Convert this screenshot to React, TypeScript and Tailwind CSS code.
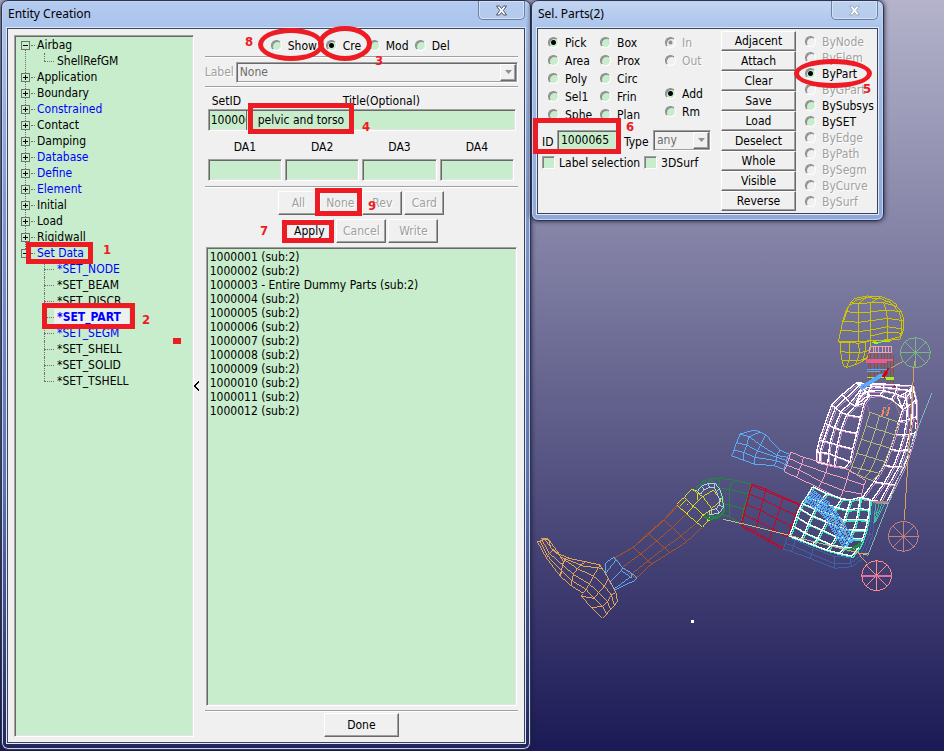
import React from 'react';
import clsx from 'clsx';

type Point = [number, number];

const FONT = "font-['DejaVu_Sans_Condensed','Noto_Sans',sans-serif]";
const SUNKEN =
  'border border-t-[#a0a0a0] border-l-[#a0a0a0] border-b-white border-r-white rounded-none shadow-[inset_1px_1px_0_#696969,inset_-1px_-1px_0_#e3e3e3] bg-[#c8edcc]';
const RAISED =
  'border border-t-white border-l-white border-b-[#696969] border-r-[#696969] shadow-[inset_-1px_-1px_0_#a0a0a0] bg-[#f0f0f0]';
const ETCHED = 'text-[#a0a0a0] [text-shadow:1px_1px_0_#fff]';

/* ---------- controls ---------- */

interface WindowProps {
  title: string;
  className?: string;
  active?: boolean;
  children: React.ReactNode;
}

const Window: React.FC<WindowProps> = ({ title, className, active, children }) => (
  <section
    className={clsx(
      'relative flex flex-col rounded-[7px] border border-[#2b3450] px-[5px] pb-[6px] shadow-[inset_0_0_0_1px_#c3d3ee,0_0_5px_#1b1b35]',
      className
    )}
  >
    <header className="flex h-[27px] shrink-0 items-start justify-between">
      <h1 className="pt-1 pl-[1px] font-['Noto_Sans',sans-serif] text-[12px] leading-[18px] text-black">
        {title}
      </h1>
      <button
        aria-label="Close"
        className="flex h-[19px] w-[47px] items-center justify-center rounded-b-[5px] border border-t-0 border-[#6c7f9f] bg-[#b9cdec]/60 shadow-[inset_0_0_0_1px_#d5e2f5]"
      >
        <svg width="13" height="11" viewBox="0 0 13 11">
          <path
            d="M1.5 1h3l2 2.5 2-2.5h3L8.3 5.5l3.2 4.5h-3l-2-2.6-2 2.6h-3l3.2-4.5z"
            fill="#fff"
            stroke={active ? '#4a5262' : '#9aa8be'}
          />
        </svg>
      </button>
    </header>
    <div className="flex grow border border-[#39435c] bg-[#f0f0f0] shadow-[0_0_0_1px_#dfe8f6]">
      {children}
    </div>
  </section>
);

interface RadioProps {
  name: string;
  label: string;
  checked?: boolean;
  disabled?: boolean;
  className?: string;
}

const Radio: React.FC<RadioProps> = ({ name, label, checked, disabled, className }) => (
  <label className={clsx('flex items-center gap-[6px]', disabled && ETCHED, className)}>
    <input
      type="radio"
      name={name}
      defaultChecked={checked}
      disabled={disabled}
      className={clsx(
        'mb-[2px] size-[11px] shrink-0 appearance-none rounded-full border border-t-[#8a8a8a] border-l-[#8a8a8a] border-r-white border-b-white shadow-[inset_1px_1px_0_#8a8a8a]',
        disabled
          ? 'bg-[#f0f0f0] checked:bg-[radial-gradient(circle,#909090_1.5px,#f0f0f0_2.5px)]'
          : 'bg-[#c8edcc] checked:bg-[radial-gradient(circle,#000_2px,#c8edcc_3px)]'
      )}
    />
    {label}
  </label>
);

interface ButtonProps {
  disabled?: boolean;
  className?: string;
  children: React.ReactNode;
}

const Button: React.FC<ButtonProps> = ({ disabled, className, children }) => (
  <button disabled={disabled} className={clsx(RAISED, disabled && ETCHED, className)}>
    {children}
  </button>
);

const Combo: React.FC<{ id: string; value: string; className?: string }> = ({
  id,
  value,
  className,
}) => (
  <div className={clsx('relative flex', className)}>
    <select
      id={id}
      disabled
      className="h-[21px] w-full appearance-none border border-t-[#a0a0a0] border-l-[#a0a0a0] border-r-white border-b-white bg-[#f0f0f0] pl-[3px] leading-4 text-[#6d6d6d] opacity-100 shadow-[inset_1px_1px_0_#696969,inset_-1px_-1px_0_#a0a0a0]"
    >
      <option>{value}</option>
    </select>
    <span
      className={clsx(
        RAISED,
        'pointer-events-none absolute top-[2px] right-[2px] flex h-[17px] w-4 items-center justify-center'
      )}
    >
      <svg width="7" height="4" viewBox="0 0 7 4">
        <path d="M0 0h7L3.5 4z" fill="#909090" />
      </svg>
    </span>
  </div>
);

const Rule = () => (
  <hr className="h-[2px] shrink-0 border-0 border-t border-b border-t-[#a0a0a0] border-b-white" />
);

/* ---------- entity creation ---------- */

interface TreeItem {
  label: string;
  blue?: boolean;
  selected?: boolean;
  children?: TreeItem[];
}

const tree: TreeItem[] = [
  { label: 'Airbag', children: [{ label: 'ShellRefGM' }] },
  { label: 'Application' },
  { label: 'Boundary' },
  { label: 'Constrained', blue: true },
  { label: 'Contact' },
  { label: 'Damping' },
  { label: 'Database', blue: true },
  { label: 'Define', blue: true },
  { label: 'Element', blue: true },
  { label: 'Initial' },
  { label: 'Load' },
  { label: 'Rigidwall' },
  {
    label: 'Set Data',
    blue: true,
    children: [
      { label: '*SET_NODE', blue: true },
      { label: '*SET_BEAM' },
      { label: '*SET_DISCR' },
      { label: '*SET_PART', blue: true, selected: true },
      { label: '*SET_SEGM', blue: true },
      { label: '*SET_SHELL' },
      { label: '*SET_SOLID' },
      { label: '*SET_TSHELL' },
    ],
  },
];

const Tree = () => (
  <ul className={clsx(SUNKEN, 'w-[180px] shrink-0 overflow-hidden pt-[1px] pl-[6px] leading-4')}>
    {tree.map((item, i) => (
      <li
        key={item.label}
        className={clsx(
          'relative',
          i < tree.length - 1 &&
            'before:absolute before:top-2 before:left-1 before:h-full before:border-l before:border-dotted before:border-[#707070]'
        )}
      >
        <div className="relative flex h-4 items-center">
          <svg width="9" height="9" viewBox="0 0 9 9" shapeRendering="crispEdges">
            <rect x=".5" y=".5" width="8" height="8" fill="#c8edcc" stroke="#707070" />
            <path d={item.children ? 'M2 4.5h5' : 'M2 4.5h5M4.5 2v5'} stroke="#000" />
          </svg>
          <span className="mx-[1px] w-1 border-t border-dotted border-[#707070]" />
          <span className={clsx('pl-[1px]', item.blue && 'text-[#0000ff]')}>{item.label}</span>
        </div>
        {item.children && (
          <ul className="ml-[23px]">
            {item.children.map((child, k) => (
              <li key={child.label} className="relative flex h-4 items-center">
                <span
                  className={clsx(
                    'absolute top-0 left-0 border-l border-dotted border-[#707070]',
                    k === item.children!.length - 1 ? 'h-2' : 'h-4'
                  )}
                />
                <span className="w-[10px] border-t border-dotted border-[#707070]" />
                <span
                  className={clsx(
                    'pl-[3px]',
                    child.blue && 'text-[#0000ff]',
                    child.selected && 'bg-[#f0f0f0] pr-2 font-bold'
                  )}
                >
                  {child.label}
                </span>
              </li>
            ))}
          </ul>
        )}
      </li>
    ))}
  </ul>
);

const parts = Array.from({ length: 12 }, (_, i) =>
  i === 2 ? '1000003 - Entire Dummy Parts (sub:2)' : `${1000001 + i} (sub:2)`
);

const EntityCreation = () => (
  <Window
    title="Entity Creation"
    active
    className="ml-[1px] min-h-[750px] w-[530px] shrink-0 bg-[linear-gradient(180deg,#b4cbf0_0px,#a9c3ec_28px,#8299cf_200px,#5f73ae_480px,#23255c_100%)]"
  >
    <div className="flex grow px-[6px] pt-[6px] pb-[5px]">
      <Tree />
      <button aria-label="Collapse tree" className="flex w-[12px] items-center justify-center">
        <svg width="6" height="10" viewBox="0 0 6 10" shapeRendering="crispEdges">
          <path d="M5 0.5L1 5l4 4.5" fill="none" stroke="#000" strokeWidth="1.5" />
        </svg>
      </button>
      <form className="flex grow flex-col pl-[4px]">
        <div className="flex h-[21px] items-center pt-[1px] pl-[66px]">
          <Radio name="mode" label="Show" className="w-[55px]" />
          <Radio name="mode" label="Cre" checked className="w-[43px]" />
          <Radio name="mode" label="Mod" className="w-[46px]" />
          <Radio name="mode" label="Del" />
        </div>
        <Rule />
        <div className="flex h-[28px] items-center">
          <label htmlFor="label" className={clsx(ETCHED, 'w-[31px]')}>
            Label
          </label>
          <Combo id="label" value="None" className="grow" />
        </div>
        <Rule />
        <div className="flex h-[21px] items-end pl-[7px] leading-4">
          <label htmlFor="setid" className="w-[131px]">
            SetID
          </label>
          <label htmlFor="title">Title(Optional)</label>
        </div>
        <div className="flex h-[22px] pr-[2px] pl-[3px]">
          <input
            id="setid"
            defaultValue="1000065"
            className={clsx(SUNKEN, 'w-[38px] border-r-0 pl-[2px]')}
          />
          <input
            id="title"
            defaultValue="pelvic and torso"
            className={clsx(SUNKEN, 'min-w-0 grow border-l-0 pl-[12px]')}
          />
        </div>
        <div className="grid h-[55px] grid-cols-4 gap-[3px] pr-[4px] pl-[3px] text-center">
          {['DA1', 'DA2', 'DA3', 'DA4'].map((name) => (
            <label key={name} className="flex flex-col items-center leading-4">
              <span className="flex h-[24px] items-end">{name}</span>
              <input className={clsx(SUNKEN, 'mt-[4px] h-[22px] w-full')} />
            </label>
          ))}
        </div>
        <Rule />
        <div className="flex h-[28px] items-center justify-center gap-[2px] pt-[2px]">
          {['All', 'None', 'Rev', 'Card'].map((name) => (
            <Button key={name} disabled className="h-[24px] w-[40px]">
              {name}
            </Button>
          ))}
        </div>
        <div className="flex h-[30px] items-center justify-center gap-[2px]">
          <Button className="h-[24px] w-[50px]">Apply</Button>
          <Button disabled className="h-[24px] w-[50px]">
            Cancel
          </Button>
          <Button disabled className="h-[24px] w-[50px]">
            Write
          </Button>
        </div>
        <ul
          className={clsx(
            SUNKEN,
            'mt-[1px] mr-[1px] mb-[4px] ml-[1px] grow pt-[2px] pl-[3px] leading-[14px]'
          )}
        >
          {parts.map((part) => (
            <li key={part}>{part}</li>
          ))}
        </ul>
        <Rule />
        <Button className="mt-[1px] h-[24px] w-[75px] self-center">Done</Button>
      </form>
    </div>
  </Window>
);

/* ---------- part selection ---------- */

const actions = ['Adjacent', 'Attach', 'Clear', 'Save', 'Load', 'Deselect', 'Whole', 'Visible', 'Reverse'];
const filters = [
  'ByNode',
  'ByElem',
  'ByPart',
  'ByGPart',
  'BySubsys',
  'BySET',
  'ByEdge',
  'ByPath',
  'BySegm',
  'ByCurve',
  'BySurf',
];
const enabledFilters = ['ByPart', 'BySubsys', 'BySET'];

const CheckBox: React.FC<{ label: string }> = ({ label }) => (
  <label className="flex items-center gap-[4px]">
    <input
      type="checkbox"
      className="mb-[2px] size-[13px] appearance-none border border-t-[#a0a0a0] border-l-[#a0a0a0] border-r-white border-b-white bg-[#c8edcc] shadow-[inset_1px_1px_0_#808080]"
    />
    {label}
  </label>
);

const SelectParts = () => (
  <Window
    title="Sel. Parts(2)"
    className="w-[353px] bg-[linear-gradient(180deg,#c3d5f2_0px,#a9c3ec_28px,#8fa8da_100%)]"
  >
    <form className="flex h-[184px] grow">
      <div className="w-[183px] shrink-0 pt-[5px] pl-[4px]">
        <div className="flex h-[94px] overflow-hidden pl-[6px] leading-[18px]">
          <div className="w-[52px]">
            {['Pick', 'Area', 'Poly', 'Sel1', 'Sphe'].map((name) => (
              <Radio key={name} name="pick" label={name} checked={name === 'Pick'} />
            ))}
          </div>
          <div className="w-[65px]">
            {['Box', 'Prox', 'Circ', 'Frin', 'Plan'].map((name) => (
              <Radio key={name} name="pick" label={name} />
            ))}
          </div>
          <div className="flex flex-col">
            <Radio name="side" label="In" checked disabled />
            <Radio name="side" label="Out" disabled />
            <Radio name="op" label="Add" checked className="mt-[15px]" />
            <Radio name="op" label="Rm" />
          </div>
        </div>
        <div className="flex h-[24px] items-center">
          <label htmlFor="partid" className="w-[15px] pt-[3px]">
            ID
          </label>
          <input
            id="partid"
            defaultValue="1000065"
            className={clsx(SUNKEN, 'h-[21px] w-[60px] pl-[3px]')}
          />
          <label htmlFor="type" className="w-[36px] pt-[3px] pl-[7px]">
            Type
          </label>
          <Combo id="type" value="any" className="w-[58px]" />
        </div>
        <div className="flex h-[22px] items-center gap-[4px]">
          <CheckBox label="Label selection" />
          <CheckBox label="3DSurf" />
        </div>
      </div>
      <div className="flex w-[75px] shrink-0 flex-col pt-[2px]">
        {actions.map((name) => (
          <Button key={name} className="h-[20px] leading-4">
            {name}
          </Button>
        ))}
      </div>
      <div className="pt-[5px] pl-[9px] leading-4">
        {filters.map((name) => (
          <Radio
            key={name}
            name="filter"
            label={name}
            checked={name === 'ByPart'}
            disabled={!enabledFilters.includes(name)}
          />
        ))}
      </div>
    </form>
  </Window>
);

/* ---------- model view ---------- */

const poly = (points: Point[]) => 'M' + points.map((p) => p.join(' ')).join('L');

interface MeshProps {
  rails: Point[][];
  color: string;
  split?: number;
  width?: number;
}

// Rails are joined by rungs; split adds extra rails between neighbours.
const Mesh: React.FC<MeshProps> = ({ rails, color, split = 1, width = 3 }) => {
  const all: Point[][] = [];
  rails.forEach((rail, i) => {
    const next = rails[i + 1];
    all.push(rail);
    if (!next) return;
    for (let s = 1; s < split; s++) {
      const t = s / split;
      all.push(rail.map(([x, y], k): Point => [x + (next[k][0] - x) * t, y + (next[k][1] - y) * t]));
    }
  });
  const rungs = rails[0].map((_, k) => all.map((rail) => rail[k]));
  return (
    <path d={[...all, ...rungs].map(poly).join('')} fill="none" stroke={color} strokeWidth={width} />
  );
};

const Wheel: React.FC<{ x: number; y: number; color: string }> = ({ x, y, color }) => {
  const rim = Array.from({ length: 17 }, (_, i): Point => {
    const a = (i * Math.PI) / 8;
    return [x + 45 * Math.cos(a), y + 45 * Math.sin(a)];
  });
  const spokes = rim.filter((_, i) => i % 2 === 0).map((p) => poly([[x, y], p]));
  return <path d={poly(rim) + spokes.join('')} fill="none" stroke={color} strokeWidth="3" />;
};

const ribsLeft: Point[][] = [
  [[230, 308], [185, 345], [155, 375], [135, 430], [118, 480], [110, 515], [110, 545]],
  [[240, 314], [198, 354], [166, 384], [146, 435], [130, 483], [120, 517], [120, 548]],
  [[248, 322], [210, 370], [182, 396], [163, 443], [150, 488], [146, 520], [143, 553]],
  [[255, 332], [225, 378], [200, 404], [182, 450], [172, 495], [166, 528], [163, 558]],
  [[270, 345], [252, 370], [242, 412], [230, 460], [218, 507], [210, 545], [195, 563]],
];

const ribsRight: Point[][] = [
  [[398, 320], [408, 360], [410, 410], [405, 460], [390, 510], [372, 560], [345, 615], [320, 668]],
  [[388, 330], [396, 370], [396, 415], [388, 463], [375, 510], [357, 560], [328, 612], [300, 664]],
  [[376, 340], [382, 380], [380, 420], [372, 465], [358, 512], [340, 560], [312, 610], [275, 662]],
  [[352, 350], [368, 390], [356, 425], [345, 463], [330, 508], [312, 556], [282, 605], [245, 655]],
];

const collar: Point[][] = [
  [[230, 308], [270, 312], [310, 312], [350, 315], [400, 318]],
  [[245, 328], [275, 320], [310, 322], [350, 326], [395, 332]],
  [[235, 352], [265, 333], [310, 332], [345, 340], [378, 355]],
  [[225, 378], [262, 348], [300, 346], [335, 358], [366, 385]],
];

const pelvis: Point[][] = [
  [[398, 200], [380, 230], [366, 250], [358, 265], [349, 290], [340, 318], [328, 348]],
  [[440, 220], [420, 245], [406, 267], [395, 287], [384, 312], [374, 338], [362, 360]],
  [[485, 236], [468, 262], [453, 284], [440, 305], [426, 330], [412, 355], [398, 374]],
  [[512, 240], [502, 270], [492, 300], [482, 325], [468, 350], [454, 375], [440, 390]],
  [[540, 232], [536, 265], [530, 298], [520, 330], [508, 356], [494, 382], [478, 400]],
  [[570, 238], [567, 270], [563, 300], [556, 330], [548, 356], [536, 382], [515, 408]],
];

const UpperBody = () => (
  <g transform="translate(780 280) scale(.33333)">
    <Mesh
      color="#ccc400"
      rails={[
        [[225, 55], [262, 48], [303, 50], [335, 62], [350, 75]],
        [[212, 68], [235, 72], [272, 68], [310, 67], [350, 80]],
        [[197, 95], [235, 98], [273, 96], [318, 90], [364, 95]],
        [[188, 123], [235, 127], [273, 122], [322, 115], [372, 122]],
        [[183, 150], [235, 155], [272, 150], [322, 140], [371, 148]],
        [[175, 185], [235, 186], [272, 182], [322, 182], [360, 177]],
      ]}
    />
    <Mesh
      color="#ccc400"
      rails={[
        [[180, 187], [210, 187], [236, 190], [256, 186], [272, 182]],
        [[182, 215], [208, 217], [238, 218], [255, 215], [270, 210]],
        [[186, 240], [207, 242], [232, 243], [250, 238], [262, 232]],
        [[190, 257], [200, 262], [225, 254], [240, 248], [260, 236]],
      ]}
    />
    <path
      d="M190 125L205 80L230 60L262 53L303 56L335 70L358 98L366 130L362 170L330 178L280 184M272 168L322 156L368 160"
      fill="none"
      stroke="#ccc400"
      strokeWidth="3"
    />
    <path d="M275 188L330 184M295 191h-12" stroke="#80ff40" strokeWidth="3" />
    <path
      d="M265 222V305M272 218V306M285 220V300M294 220V300M304 220V296M313 220V300M322 220V306M333 220V310M340 225V312"
      stroke="#90502c"
      strokeWidth="3"
    />
    <path
      d="M270 201H335V219H270zM280 201V219M288 201V219M296 201V219M307 201V219M318 201V219M327 201V219"
      fill="none"
      stroke="#f0a0b8"
      strokeWidth="3"
    />
    <path d="M258 240H340M258 246H320" stroke="#f05a90" strokeWidth="4" />
    <path d="M260 268H325M262 274H300" stroke="#5aaaf8" strokeWidth="4" />
    <path d="M262 292H342M318 297H342" stroke="#a0f030" strokeWidth="4" />
    <g transform="translate(4 4)">
      <Mesh color="#d090d4" rails={ribsLeft} />
      <Mesh color="#d090d4" rails={ribsRight} />
      <Mesh color="#d090d4" rails={collar} />
    </g>
    <Mesh color="#fff" width={4} rails={ribsLeft} />
    <Mesh color="#fff" width={4} rails={ribsRight} />
    <Mesh color="#fff" width={4} rails={collar} />
    <Mesh
      color="#b8b878"
      split={3}
      rails={[
        [[270, 397], [258, 437], [245, 478], [231, 520], [215, 560], [210, 575]],
        [[355, 427], [345, 465], [330, 505], [315, 545], [298, 580], [278, 602]],
      ]}
    />
    <path d="M243 328L318 280M248 326L300 288M240 322L305 282" stroke="#5aaaf8" strokeWidth="6" />
    <path d="M308 290L325 265M312 292L322 275" stroke="#d00020" strokeWidth="5" />
    <path
      d="M312 380L306 408M328 380L322 408M314 384h5M320 392h5M308 400h5M318 406h4"
      stroke="#ff8070"
      strokeWidth="5"
    />
    <path d="M320 388L316 405M314 395h10" stroke="#30a060" strokeWidth="4" />
    <path d="M262 375L268 395M340 362L322 378M342 362L360 405" stroke="#c08080" strokeWidth="2" />
    <path d="M340 319h8" stroke="#d00020" strokeWidth="4" />
    <path d="M333 264L368 245M403 242L373 720" stroke="#d8a060" strokeWidth="3" />
    <path d="M410 420L405 470M400 480L330 660" stroke="#905030" strokeWidth="3" strokeDasharray="8 5" />
    <path d="M455 340L263 827" stroke="#80b8b8" strokeWidth="3" />
    <Wheel x={406} y={218} color="#78b880" />
  </g>
);

const MiddleBody = () => (
  <g transform="translate(680 420) scale(.33333)">
    <Mesh
      color="#5aaaf8"
      rails={[
        [[223, 30], [240, 36], [257, 45], [300, 90], [328, 103]],
        [[180, 42], [207, 50], [242, 75], [290, 106], [322, 112]],
        [[170, 68], [200, 75], [232, 92], [290, 112], [320, 122]],
        [[162, 90], [192, 98], [225, 112], [290, 122], [316, 134]],
        [[155, 108], [190, 120], [222, 132], [282, 137], [312, 148]],
      ]}
    />
    <Mesh
      color="#f0a0b8"
      rails={[
        [[333, 96], [370, 112], [445, 132], [508, 150], [558, 182]],
        [[327, 115], [365, 132], [437, 158], [502, 178], [552, 195]],
        [[320, 135], [358, 150], [425, 186], [490, 212], [545, 222]],
        [[312, 155], [350, 172], [415, 203], [480, 235], [540, 242]],
      ]}
    />
    <Mesh
      color="#208840"
      rails={[
        [[48, 205], [70, 182], [95, 175], [120, 175], [160, 180], [212, 192]],
        [[52, 208], [73, 188], [95, 180], [118, 205], [148, 208], [205, 222]],
      ]}
    />
    <Mesh
      color="#208840"
      rails={[
        [[118, 205], [148, 208], [205, 222]],
        [[128, 250], [148, 255], [192, 267]],
        [[130, 285], [150, 290], [182, 312]],
      ]}
    />
    <path
      d="M72 290L90 298L118 292L132 275L130 240L118 210M80 284L100 292L122 284"
      fill="none"
      stroke="#208840"
      strokeWidth="5"
    />
    <Mesh
      color="#b0d0e0"
      rails={[
        [[52, 215], [65, 198], [85, 190], [105, 190], [118, 205], [128, 235], [130, 262], [118, 280], [88, 284]],
        [[62, 222], [72, 210], [88, 202], [102, 204], [110, 215], [118, 238], [118, 255], [108, 266], [88, 272]],
      ]}
    />
    <Mesh
      color="#d00020"
      split={4}
      rails={[
        [[215, 192], [258, 207], [310, 232], [358, 252]],
        [[183, 315], [225, 335], [268, 360], [310, 385]],
      ]}
    />
    <path d="M217 197L358 255M186 320L308 387M216 192L184 315" stroke="#d00020" strokeWidth="3" />
    <Mesh
      color="#4060a8"
      rails={[
        [[322, 352], [345, 360], [400, 385], [465, 410], [510, 412], [535, 395], [556, 345], [572, 250]],
        [[316, 370], [340, 378], [395, 402], [465, 432], [512, 430], [540, 408], [568, 345], [580, 250]],
        [[310, 387], [335, 395], [390, 415], [465, 445], [517, 440], [548, 415], [578, 345], [588, 250]],
      ]}
    />
    <Mesh
      color="#40e0b8"
      width={2}
      split={3}
      rails={[
        [[588, 252], [584, 280], [582, 308]],
        [[615, 250], [602, 275], [586, 306]],
      ]}
    />
    <g transform="translate(4 4)">
      <Mesh color="#40e8c0" width={4} rails={pelvis} />
    </g>
    <Mesh color="#fff" width={4} rails={pelvis} />
    <path
      d="M385 225L440 268L508 372"
      fill="none"
      stroke="#5aaaf8"
      strokeWidth="44"
      strokeDasharray="5 2"
    />
    <path
      d="M392 212L450 260L520 365M380 235L432 280L500 378M386 224L440 270L510 372"
      fill="none"
      stroke="#34508c"
      strokeWidth="3"
      strokeDasharray="4 5"
    />
    <path d="M455 295L505 355M480 290L500 340" stroke="#c0a070" strokeWidth="3" strokeDasharray="9 5" />
    <path d="M502 395L545 368M510 390L540 375" stroke="#208840" strokeWidth="7" />
    <path d="M130 298L200 314L560 405" fill="none" stroke="#c0b880" strokeWidth="3" />
    <path d="M520 385L562 430M535 400h28" stroke="#d8a060" strokeWidth="3" />
    <path d="M580 245H625" stroke="#c08080" strokeWidth="6" />
    <Wheel x={670} y={349} color="#c08080" />
    <Wheel x={590} y={467} color="#ff8888" />
    <path d="M545 468H635" stroke="#e070a0" strokeWidth="5" />
  </g>
);

const Leg = () => (
  <g transform="translate(520 460) scale(.33333)">
    <Mesh
      color="#a85428"
      rails={[
        [[470, 135], [432, 180], [387, 222], [340, 262], [285, 293]],
        [[500, 162], [457, 203], [410, 243], [362, 282], [307, 322]],
        [[547, 202], [500, 245], [450, 278], [395, 312], [348, 355]],
      ]}
    />
    <path
      d="M480 130L440 172L382 222L345 258L292 290M530 188L483 228L433 264L385 302L335 342"
      fill="none"
      stroke="#a85428"
      strokeWidth="3"
    />
    <Mesh
      color="#d8dc18"
      rails={[
        [[515, 87], [548, 110], [577, 148], [567, 182]],
        [[493, 112], [520, 138], [550, 165], [565, 180]],
        [[470, 133], [500, 162], [530, 187], [547, 202]],
      ]}
    />
    <path
      d="M515 87L535 95L532 120M548 110L580 90L603 122L577 144M480 138L502 116M501 135h3"
      fill="none"
      stroke="#d8dc18"
      strokeWidth="3"
    />
    <path
      d="M282 292L257 308V340L270 366L285 390L343 362L350 353L335 340L307 322L282 292M257 340L288 300M270 366L307 330M285 385L333 350M307 322L305 332L335 354V340"
      fill="none"
      stroke="#5aaaf8"
      strokeWidth="3"
    />
    <Mesh
      color="#e0a458"
      rails={[
        [[85, 237], [118, 283], [148, 295], [195, 305], [240, 315], [265, 355], [288, 398], [292, 425]],
        [[75, 238], [98, 270], [135, 300], [172, 326], [220, 348], [253, 378], [274, 405], [283, 437]],
        [[66, 240], [88, 280], [128, 315], [160, 343], [208, 372], [236, 398], [262, 425], [272, 448]],
        [[60, 243], [82, 287], [124, 332], [156, 362], [198, 388], [222, 415], [248, 440], [260, 462]],
        [[52, 245], [80, 295], [122, 350], [155, 378], [190, 400], [182, 408], [215, 442], [247, 475]],
      ]}
    />
    <path
      d="M62 236H85M85 237L92 262L125 292L190 318L245 325M110 272L130 305L120 350"
      fill="none"
      stroke="#e0a458"
      strokeWidth="3"
    />
  </g>
);

const ModelView = () => (
  <svg
    aria-label="Seated dummy model"
    className="absolute top-0 left-0"
    width="413"
    height="751"
    viewBox="531 0 413 751"
    shapeRendering="crispEdges"
  >
    <Leg />
    <UpperBody />
    <MiddleBody />
    <rect x="691" y="620" width="3" height="3" fill="#fff" />
  </svg>
);

/* ---------- step markers ---------- */

const Markers = () => (
  <div className="pointer-events-none absolute inset-0 text-[13px] leading-4 font-bold text-[#ed1c24]">
    <div className="absolute top-[242px] left-[26px] h-[22px] w-[67px] border-[5px] border-[#ed1c24]" />
    <div className="absolute top-[303px] left-[42px] h-[26px] w-[93px] border-[5px] border-[#ed1c24]" />
    <div className="absolute top-[103px] left-[248px] h-[31px] w-[106px] border-[5px] border-[#ed1c24]" />
    <div className="absolute top-[188px] left-[315px] h-[28px] w-[47px] border-[5px] border-[#ed1c24]" />
    <div className="absolute top-[220px] left-[282px] h-[23px] w-[52px] border-[5px] border-[#ed1c24]" />
    <div className="absolute top-[118px] left-[533px] h-[36px] w-[88px] border-[5px] border-[#ed1c24]" />
    <div className="absolute top-[28px] left-[258px] h-[33px] w-[66px] rounded-[50%] border-[5px] border-[#ed1c24]" />
    <div className="absolute top-[26px] left-[318px] h-[35px] w-[54px] rounded-[50%] border-[5px] border-[#ed1c24]" />
    <div className="absolute top-[59px] left-[794px] h-[29px] w-[78px] rounded-[50%] border-[5px] border-[#ed1c24]" />
    <div className="absolute top-[338px] left-[173px] h-[6px] w-[8px] bg-[#ed1c24]" />
    <span className="absolute top-[242px] left-[103px]">1</span>
    <span className="absolute top-[312px] left-[142px]">2</span>
    <span className="absolute top-[53px] left-[375px]">3</span>
    <span className="absolute top-[119px] left-[362px]">4</span>
    <span className="absolute top-[81px] left-[863px]">5</span>
    <span className="absolute top-[119px] left-[626px]">6</span>
    <span className="absolute top-[223px] left-[260px]">7</span>
    <span className="absolute top-[34px] left-[245px]">8</span>
    <span className="absolute top-[198px] left-[368px]">9</span>
  </div>
);

const App: React.FC = () => (
  <main
    className={clsx(
      FONT,
      'relative flex min-h-screen items-stretch overflow-hidden bg-[linear-gradient(180deg,#b4b3cb,#1c1a56)] pb-[1px] text-[12px] leading-4 text-black'
    )}
  >
    <EntityCreation />
    <div className="relative grow">
      <ModelView />
      <SelectParts />
    </div>
    <Markers />
  </main>
);

export default App;
